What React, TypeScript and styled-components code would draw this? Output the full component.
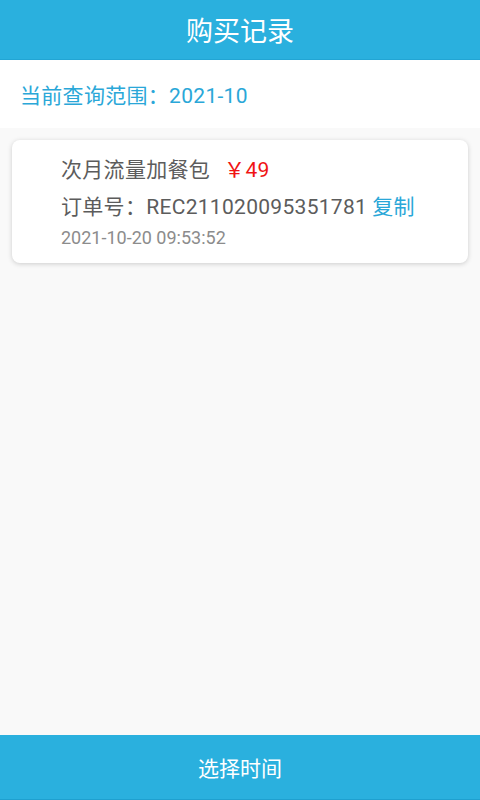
import React from 'react';
import styled, { createGlobalStyle } from 'styled-components';

const GlobalStyle = createGlobalStyle`
  html, body {
    margin: 0;
    padding: 0;
    background: #f9f9f9;
    font-family: Roboto, "Noto Sans CJK SC", sans-serif;
  }
  #root {
    min-height: 100vh;
  }
`;

const Page = styled.div`
  min-height: 100vh;
  display: flex;
  flex-direction: column;
`;

const Header = styled.header`
  height: 59px;
  background: #2ab0de;
  border-bottom: 1px solid #22a5d4;
  display: flex;
  align-items: center;
  justify-content: center;
  color: #fff;
  font-size: 27px;
`;

const RangeBar = styled.div`
  height: 68px;
  background: #fff;
  display: flex;
  align-items: center;
  padding: 0 20px;
  color: #2aa7d8;
  font-size: 21px;
  letter-spacing: 0.3px;
`;

const List = styled.main`
  flex: 1;
  padding: 12px 12px;
  display: flex;
  flex-direction: column;
  gap: 12px;
`;

const Card = styled.div`
  background: #fff;
  border-radius: 8px;
  box-shadow: 0 1px 5px rgba(0, 0, 0, 0.18);
  padding: 14px 20px 13px 49px;
  display: flex;
  flex-direction: column;
`;

const Line = styled.div<{ $gap?: number }>`
  display: flex;
  align-items: center;
  height: 28px;
  margin-top: ${p => p.$gap ?? 0}px;
  font-size: 21px;
  letter-spacing: 0.3px;
  color: #5c5c5c;
  white-space: nowrap;
`;

const Price = styled.span`
  color: #f01414;
  margin-left: 14px;
`;

const CopyLink = styled.span`
  color: #2aa7d8;
  margin-left: 5px;
`;

const Time = styled.div`
  height: 24px;
  line-height: 24px;
  margin-top: 7px;
  font-size: 18px;
  color: #8c8c8c;
`;

const Footer = styled.button`
  height: 65px;
  border: none;
  border-bottom: 1px solid #1fa0cf;
  background: #2ab0de;
  color: #fff;
  font-family: inherit;
  font-size: 21px;
  width: 100%;
  padding: 0;
`;

const records = [
  {
    name: '次月流量加餐包',
    price: '￥49',
    order: 'REC211020095351781',
    time: '2021-10-20 09:53:52',
  },
];

export default function App() {
  return (
    <Page>
      <GlobalStyle />
      <Header>购买记录</Header>
      <RangeBar>当前查询范围：2021-10</RangeBar>
      <List>
        {records.map(r => (
          <Card key={r.order}>
            <Line>
              {r.name}
              <Price>{r.price}</Price>
            </Line>
            <Line $gap={9}>
              订单号：{r.order}
              <CopyLink>复制</CopyLink>
            </Line>
            <Time>{r.time}</Time>
          </Card>
        ))}
      </List>
      <Footer>选择时间</Footer>
    </Page>
  );
}
